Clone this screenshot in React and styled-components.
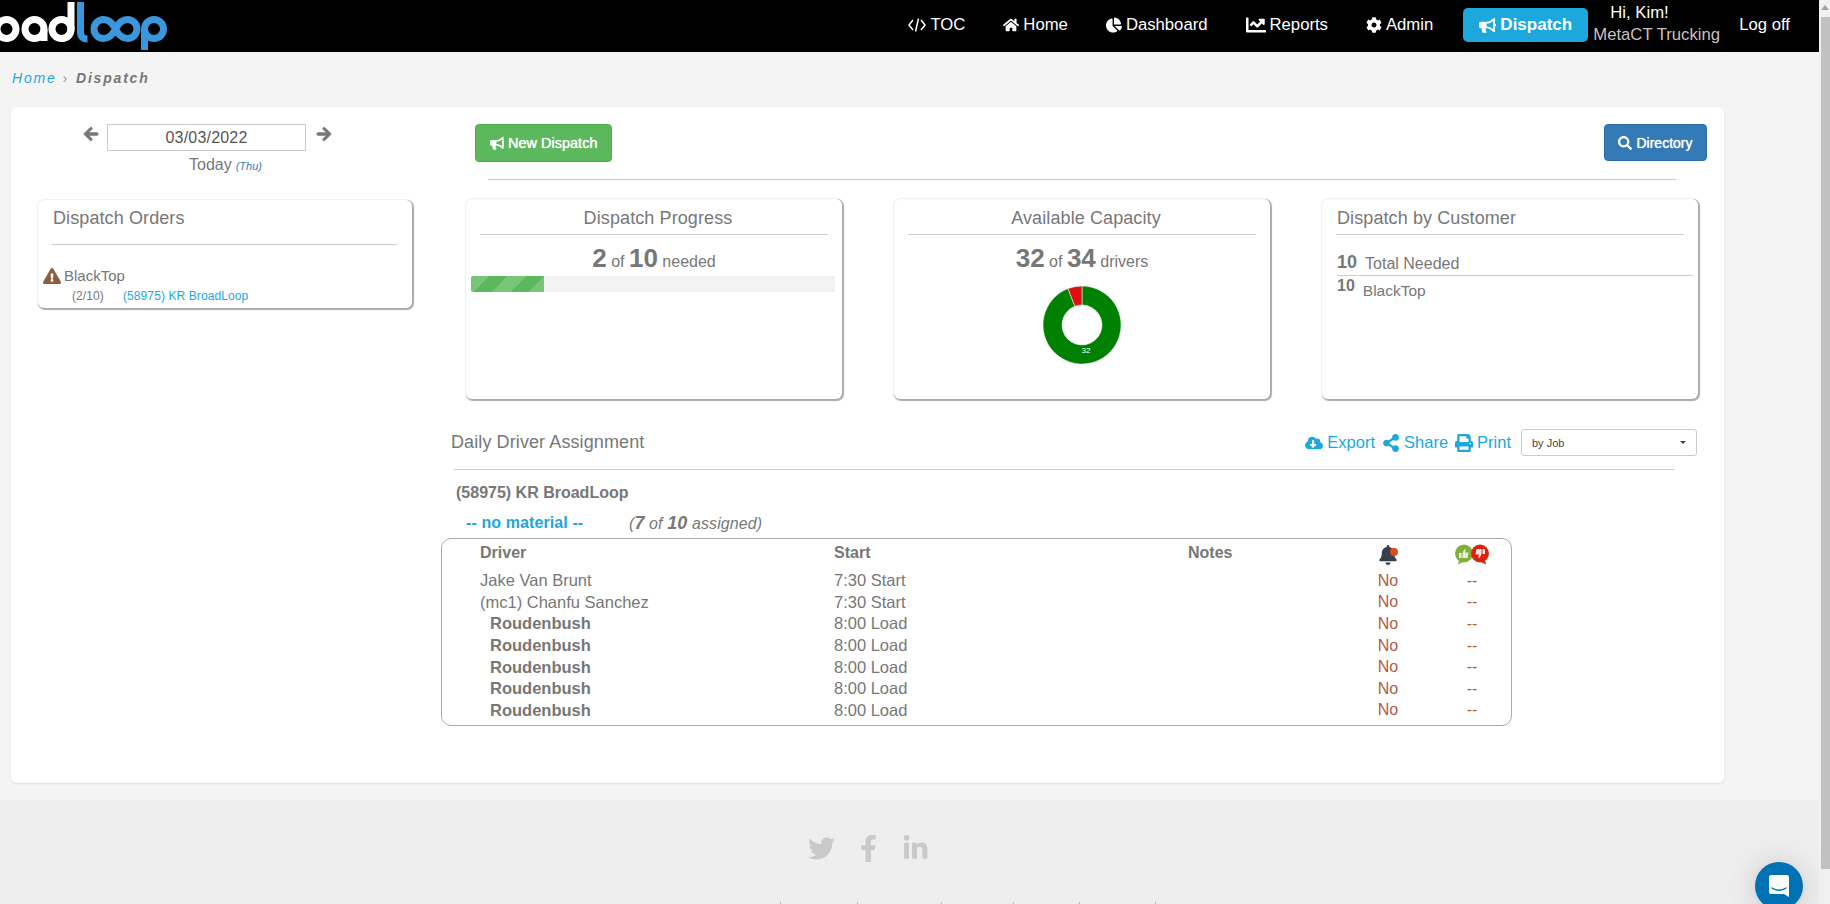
import React from 'react';
import styled, { createGlobalStyle } from 'styled-components';
import {
	FaArrowLeft,
	FaArrowRight,
	FaBell,
	FaBullhorn,
	FaChartLine,
	FaChartPie,
	FaCloudDownloadAlt,
	FaCog,
	FaExclamationTriangle,
	FaFacebookF,
	FaHome,
	FaLinkedinIn,
	FaPrint,
	FaSearch,
	FaShareAlt,
	FaTwitter,
} from 'react-icons/fa';

const GlobalStyle = createGlobalStyle`
	html, body {
		margin: 0;
		height: 904px;
		overflow: hidden;
		background: #f4f4f4;
	}
	body, button, select {
		font-family: "Liberation Sans", Arial, sans-serif;
	}
	* {
		box-sizing: border-box;
	}
`;

const Page = styled.div`
	width: 1819px;
	height: 904px;
	overflow: hidden;
	color: #777;
`;

const Navbar = styled.div`
	height: 52px;
	background: #000;
	display: flex;
	align-items: center;
	padding: 0 29px 2px 0;
	width: 1819px;
`;

const LogoBox = styled.div`
	margin-right: auto;
	height: 52px;
	align-self: flex-start;
	svg {
		display: block;
	}
`;

const NavLink = styled.a`
	color: #fff;
	font-size: 16.7px;
	display: flex;
	align-items: center;
	gap: 4px;
	margin-right: 38px;
	svg {
		font-size: 16px;
	}
`;

const DispatchTab = styled.a`
	width: 125px;
	height: 34px;
	margin-left: -8px;
	background: #1ca8dd;
	border-radius: 5px;
	color: #fff;
	font-size: 17px;
	font-weight: bold;
	display: flex;
	align-items: center;
	justify-content: center;
	gap: 4px;
`;

const UserBox = styled.div`
	width: 151px;
	font-size: 16.7px;
	line-height: 22px;
	color: #fff;
	margin-top: -2px;
	padding-left: 5px;
`;

const Greeting = styled.div`
	padding-left: 17px;
`;

const Company = styled.div`
	color: #cdbfbf;
	white-space: nowrap;
`;

const LogOff = styled.a`
	color: #fff;
	font-size: 16.7px;
`;

const Breadcrumb = styled.div`
	height: 55px;
	padding: 18px 0 0 12px;
	font-size: 14px;
	font-style: italic;
	letter-spacing: 1.8px;
	line-height: 16px;
	span {
		font-style: normal;
		margin: 0 7px 0 6px;
		color: #999;
	}
	a {
		color: #1ca8dd;
	}
	b {
		color: #777;
	}
`;

const Panel = styled.div`
	margin-left: 11px;
	width: 1713px;
	height: 676px;
	background: #fff;
	border-radius: 6px;
	box-shadow: 0 1px 2px #ddd;
	display: flex;
`;

const LeftColumn = styled.div`
	width: 430px;
	padding-top: 17px;
`;

const RightColumn = styled.div`
	flex: 1;
	padding: 17px 17px 0 0;
`;

const DateRow = styled.div`
	display: flex;
	align-items: flex-start;
	padding-left: 72px;
	color: #777;
	> svg {
		font-size: 16px;
		margin-top: 2px;
		stroke: currentColor;
		stroke-width: 30px;
	}
`;

const DateInput = styled.div`
	width: 199px;
	height: 27px;
	margin: 0 10px 0 8px;
	border: 1px solid #ccc;
	font-size: 16px;
	letter-spacing: 0.2px;
	line-height: 25px;
	text-align: center;
	color: #555;
`;

const TodayLine = styled.div`
	margin: 4px 0 0 178px;
	font-size: 16px;
	line-height: 20px;
	i {
		font-size: 11px;
		color: #337ab7;
		margin-left: 4px;
	}
`;

const Card = styled.div`
	background: #fff;
	border-radius: 6px;
	box-shadow: 1px 1px 1px 1px #aaa, 0 0 2px #e8e8e8;
	height: ${(p) => p.$height}px;
	padding: 0 15px;
	text-align: ${(p) => (p.$center ? 'center' : 'left')};
`;

const OrdersCard = styled(Card)`
	margin: 24px 0 0 27px;
	width: 374px;
`;

const CardTitle = styled.div`
	font-size: 18px;
	letter-spacing: 0.1px;
	line-height: 20px;
	padding: 9px 0 6px;
	border-bottom: 1px solid #ccc;
	color: #777;
`;

const OrdersTitle = styled(CardTitle)`
	padding: 8px 0 16px 1px;
	margin: 0 0 0 -1px;
`;

const OrderName = styled.div`
	display: flex;
	align-items: center;
	margin: 21px 0 0 -10px;
	font-size: 15px;
	line-height: 20px;
	gap: 3px;
	svg {
		color: #8a5e3c;
		font-size: 18px;
	}
`;

const OrderLine = styled.div`
	display: flex;
	font-size: 12px;
	letter-spacing: 0.1px;
	line-height: 14px;
	margin: 3px 0 0 19px;
	a {
		color: #1ca8dd;
		margin-left: 19px;
	}
`;

const Toolbar = styled.div`
	display: flex;
	justify-content: space-between;
	align-items: flex-start;
	padding-left: 34px;
`;

const Button = styled.button`
	border: 1px solid ${(p) => p.$border};
	background: ${(p) => p.$color};
	color: #fff;
	border-radius: 4px;
	font-size: ${(p) => p.$size}px;
	height: ${(p) => p.$height}px;
	width: ${(p) => p.$width}px;
	display: flex;
	align-items: center;
	justify-content: center;
	gap: 4px;
	padding: 0;
	text-shadow: 0 0 1px #fff;
`;

const Rule = styled.div`
	height: 1px;
	background: #ccc;
	margin: ${(p) => p.$margin};
`;

const CardRow = styled.div`
	display: flex;
	gap: 52px;
	margin-left: 25px;
`;

const StatCard = styled(Card)`
	width: 376px;
	padding: 0 5px;
`;

const StatTitle = styled(CardTitle)`
	margin: 0 9px;
	padding-left: ${(p) => (p.$center ? 8 : 1)}px;
`;

const StatLine = styled.div`
	font-size: 16px;
	line-height: 30px;
	margin-top: 8px;
	b {
		font-size: 26px;
	}
`;

const ProgressTrack = styled.div`
	height: 16px;
	margin: -1px 2px 0 0;
	background: #f4f4f4;
	border-radius: 3px;
	box-shadow: inset 0 0 1px #ccc;
	overflow: hidden;
`;

const ProgressFill = styled.div`
	height: 100%;
	background-color: #5cb85c;
	background-image: repeating-linear-gradient(
		135deg,
		#78c678 0,
		#78c678 13px,
		#5cb85c 13px,
		#5cb85c 26px
	);
`;

const DonutBox = styled.div`
	margin-top: 8px;
	svg {
		display: block;
		margin: 0 auto;
	}
`;

const CustomerRow = styled.div`
	display: flex;
	align-items: flex-start;
	margin-left: 10px;
	line-height: 20px;
	b {
		font-size: ${(p) => p.$big}px;
		margin-right: ${(p) => p.$gap}px;
	}
	span {
		font-size: ${(p) => p.$size}px;
		margin-top: ${(p) => p.$drop}px;
	}
`;

const TotalRow = styled(CustomerRow)`
	margin-top: 17px;
	padding-bottom: 1px;
	border-bottom: 1px solid #ccc;
`;

const SectionHead = styled.div`
	display: flex;
	align-items: center;
	justify-content: space-between;
	height: 27px;
	margin: 30px 10px 0 10px;
`;

const SectionTitle = styled.div`
	font-size: 18px;
	letter-spacing: 0.1px;
`;

const Actions = styled.div`
	display: flex;
	align-items: center;
	gap: 7px;
	font-size: 16.5px;
	color: #1ca8dd;
`;

const Action = styled.a`
	display: flex;
	align-items: center;
	gap: 4px;
	svg {
		font-size: 18px;
	}
`;

const Select = styled.div`
	width: 176px;
	height: 27px;
	margin-left: 3px;
	border: 1px solid #ccc;
	border-radius: 3px;
	font-size: 11px;
	color: #444;
	display: flex;
	align-items: center;
	justify-content: space-between;
	padding: 0 10px;
	&::after {
		content: '';
		border: 3px solid transparent;
		border-top-color: #444;
		border-bottom: 0;
	}
`;

const JobName = styled.div`
	font-size: 16px;
	font-weight: bold;
	line-height: 20px;
	margin: 13px 0 0 15px;
`;

const MaterialLine = styled.div`
	display: flex;
	font-size: 16px;
	letter-spacing: 0.1px;
	line-height: 20px;
	margin: 10px 0 0 25px;
	height: 25px;
`;

const Material = styled.b`
	width: 163px;
	color: #1ca8dd;
`;

const Assigned = styled.i`
	b {
		font-size: 18px;
	}
`;

const DriverTable = styled.div`
	width: 1071px;
	height: 188px;
	border: 1px solid #aaa;
	border-radius: 10px;
`;

const TableRow = styled.div`
	display: grid;
	grid-template-columns: 38px 354px 354px 150px 100px 68px;
	height: ${(p) => p.$height}px;
	align-items: center;
	font-size: 16.5px;
`;

const HeadCell = styled.b`
	font-size: 16px;
	padding-bottom: 3px;
	grid-column: ${(p) => (p.$first ? 2 : 'auto')};
`;

const DriverCell = styled.div`
	grid-column: 2;
	padding-left: ${(p) => (p.$bold ? 10 : 0)}px;
	font-weight: ${(p) => (p.$bold ? 'bold' : 'normal')};
`;

const StatusCell = styled.div`
	text-align: center;
	font-size: 16px;
	color: #b05c43;
`;

const IconCell = styled.div`
	display: flex;
	justify-content: center;
	svg {
		display: block;
	}
`;

const BellWrap = styled.div`
	position: relative;
	height: 20px;
	font-size: 20px;
	color: #34404f;
	&::after {
		content: '';
		position: absolute;
		top: 3px;
		right: 0;
		width: 8px;
		height: 8px;
		border-radius: 50%;
		background: #dd4a1f;
	}
`;

const Footer = styled.div`
	margin-top: 17px;
	height: 104px;
	background: #eee;
`;

const Social = styled.div`
	display: flex;
	justify-content: center;
	align-items: flex-start;
	gap: 20px;
	width: 1736px;
	padding-top: 35px;
	height: 102px;
	font-size: 27px;
	color: #c8cac8;
`;

const FooterLinks = styled.div`
	display: flex;
	padding-left: 780px;
	height: 2px;
`;

const FooterLink = styled.div`
	width: ${(p) => p.$width}px;
	border-left: 1px solid #bbb;
`;

const ScrollTrack = styled.div`
	position: fixed;
	top: 0;
	right: 0;
	width: 11px;
	height: 904px;
	background: #f1f1f1;
`;

const ScrollArrow = styled.div`
	width: 0;
	margin: 5px auto 0;
	border: 4px solid transparent;
	border-top: 0;
	border-bottom: 5px solid #a3a3a3;
`;

const ScrollThumb = styled.div`
	position: absolute;
	left: 2px;
	right: 0;
	top: 17px;
	height: 852px;
	background: #c1c1c1;
`;

const ChatBubble = styled.div`
	position: fixed;
	left: 1755px;
	top: 862px;
	width: 48px;
	height: 48px;
	border-radius: 50%;
	background: #0071b2;
	box-shadow: 0 1px 6px rgba(0, 0, 0, 0.06), 0 2px 32px rgba(0, 0, 0, 0.16);
	display: flex;
	align-items: center;
	justify-content: center;
`;

const Logo = () => (
	<svg width="170" height="52" viewBox="0 0 170 52" fill="none" strokeWidth="7">
		<g stroke="#fff">
			<circle cx="6.5" cy="29" r="9.5" />
			<circle cx="34.5" cy="29" r="9.5" />
			<path d="M44 29V41" />
			<circle cx="61.5" cy="29" r="9.5" />
			<path d="M71 2V29c0 6-4 9.500-9.500 9.500" />
		</g>
		<g stroke="#3a97dc">
			<path d="M80.500 2V32c0 5 3 7 7 7" />
			<path d="M115.500 29c-3-6-7-9.500-12-9.500a9.500 9.500 0 0 0 0 19c5 0 9-3.500 12-9.500c3-6 7-9.500 12-9.500a9.500 9.500 0 0 1 0 19c-5 0-9-3.500-12-9.500Z" />
			<circle cx="154" cy="29" r="9.500" />
			<path d="M144.500 29V50" />
		</g>
	</svg>
);

const CodeIcon = () => (
	<svg width="18" height="14" viewBox="0 0 18 14" fill="none" stroke="#fff" strokeWidth="1.500">
		<path d="M5 2 1 7l4 5M13 2l4 5-4 5M10.500 0.500 7.500 13.500" />
	</svg>
);

const arcPath = (from, to, outer, inner) => {
	const point = (deg, r) => {
		const rad = ((deg - 90) * Math.PI) / 180;
		return `${40 + r * Math.cos(rad)} ${40 + r * Math.sin(rad)}`;
	};
	const large = to - from > 180 ? 1 : 0;
	return `M${point(from, outer)}A${outer} ${outer} 0 ${large} 1 ${point(to, outer)}L${point(to, inner)}A${inner} ${inner} 0 ${large} 0 ${point(from, inner)}Z`;
};

const Donut = () => (
	<svg width="80" height="80" viewBox="0 0 80 80">
		<path d={arcPath(0, 339, 39, 20)} fill="#008000" stroke="#fff" strokeWidth="0.5" />
		<path d={arcPath(339, 360, 39, 20)} fill="#dc1010" stroke="#fff" strokeWidth="0.5" />
		<text x="44" y="68" fontSize="8" fill="#fff" textAnchor="middle" fontFamily="Liberation Sans">
			32
		</text>
	</svg>
);

const ThumbBubbles = () => (
	<svg width="34" height="21" viewBox="0 0 34 21">
		<circle cx="9" cy="9.500" r="9" fill="#7fb13c" />
		<path d="M4 16 3 20.500 8 18Z" fill="#7fb13c" />
		<path d="M4 9h2.500v5H4zM7.500 9l2-4 1.200.5-.7 3h3.500l-1 5.500H7.500z" fill="#e8f0d8" />
		<circle cx="25" cy="9.500" r="9" fill="#d9230f" />
		<path d="M30 16l1 4.500-5-2.500Z" fill="#d9230f" />
		<path d="M30 10h-2.500V5H30zM26.500 10l-2 4-1.200-.5.700-3h-3.500l1-5.500h5z" fill="#fbe6e2" />
	</svg>
);

const drivers = [
	{ name: 'Jake Van Brunt', start: '7:30 Start' },
	{ name: '(mc1) Chanfu Sanchez', start: '7:30 Start' },
	{ name: 'Roudenbush', start: '8:00 Load', bold: true },
	{ name: 'Roudenbush', start: '8:00 Load', bold: true },
	{ name: 'Roudenbush', start: '8:00 Load', bold: true },
	{ name: 'Roudenbush', start: '8:00 Load', bold: true },
	{ name: 'Roudenbush', start: '8:00 Load', bold: true },
];

const App = () => (
	<Page>
		<GlobalStyle />
		<Navbar>
			<LogoBox>
				<Logo />
			</LogoBox>
			<NavLink>
				<CodeIcon /> TOC
			</NavLink>
			<NavLink>
				<FaHome /> Home
			</NavLink>
			<NavLink>
				<FaChartPie /> Dashboard
			</NavLink>
			<NavLink>
				<FaChartLine size={20} /> Reports
			</NavLink>
			<NavLink>
				<FaCog /> Admin
			</NavLink>
			<DispatchTab>
				<FaBullhorn /> Dispatch
			</DispatchTab>
			<UserBox>
				<Greeting>Hi, Kim!</Greeting>
				<Company>MetaCT Trucking</Company>
			</UserBox>
			<LogOff>Log off</LogOff>
		</Navbar>
		<Breadcrumb>
			<a>Home</a>
			<span>›</span>
			<b>Dispatch</b>
		</Breadcrumb>
		<Panel>
			<LeftColumn>
				<DateRow>
					<FaArrowLeft />
					<DateInput>03/03/2022</DateInput>
					<FaArrowRight />
				</DateRow>
				<TodayLine>
					Today<i>(Thu)</i>
				</TodayLine>
				<OrdersCard $height={108}>
					<OrdersTitle>Dispatch Orders</OrdersTitle>
					<OrderName>
						<FaExclamationTriangle /> BlackTop
					</OrderName>
					<OrderLine>
						(2/10)
						<a>(58975) KR BroadLoop</a>
					</OrderLine>
				</OrdersCard>
			</LeftColumn>
			<RightColumn>
				<Toolbar>
					<Button $color="#5cb85c" $border="#4cae4c" $width={137} $height={38} $size={14.5}>
						<FaBullhorn /> New Dispatch
					</Button>
					<Button $color="#337ab7" $border="#2e6da4" $width={103} $height={37} $size={14}>
						<FaSearch /> Directory
					</Button>
				</Toolbar>
				<Rule $margin="17px 31px 19px 47px" />
				<CardRow>
					<StatCard $height={200} $center>
						<StatTitle $center>Dispatch Progress</StatTitle>
						<StatLine>
							<b>2</b> of <b>10</b> needed
						</StatLine>
						<ProgressTrack>
							<ProgressFill style={{ width: `${(2 / 10) * 100}%` }} />
						</ProgressTrack>
					</StatCard>
					<StatCard $height={200} $center>
						<StatTitle $center>Available Capacity</StatTitle>
						<StatLine>
							<b>32</b> of <b>34</b> drivers
						</StatLine>
						<DonutBox>
							<Donut />
						</DonutBox>
					</StatCard>
					<StatCard $height={200}>
						<StatTitle>Dispatch by Customer</StatTitle>
						<TotalRow $size={16} $big={18} $gap={8} $drop={2}>
							<b>10</b>
							<span>Total Needed</span>
						</TotalRow>
						<CustomerRow $size={15.5} $big={16} $gap={8} $drop={5}>
							<b>10</b>
							<span>BlackTop</span>
						</CustomerRow>
					</StatCard>
				</CardRow>
				<SectionHead>
					<SectionTitle>Daily Driver Assignment</SectionTitle>
					<Actions>
						<Action>
							<FaCloudDownloadAlt /> Export
						</Action>
						<Action>
							<FaShareAlt /> Share
						</Action>
						<Action>
							<FaPrint /> Print
						</Action>
						<Select>by Job</Select>
					</Actions>
				</SectionHead>
				<Rule $margin="13px 32px 0 13px" />
				<JobName>(58975) KR BroadLoop</JobName>
				<MaterialLine>
					<Material>-- no material --</Material>
					<Assigned>
						(<b>7</b> of <b>10</b> assigned)
					</Assigned>
				</MaterialLine>
				<DriverTable>
					<TableRow $height={31}>
						<HeadCell $first>Driver</HeadCell>
						<HeadCell>Start</HeadCell>
						<HeadCell>Notes</HeadCell>
						<IconCell>
							<BellWrap>
								<FaBell />
							</BellWrap>
						</IconCell>
						<IconCell>
							<ThumbBubbles />
						</IconCell>
					</TableRow>
					{drivers.map((driver, i) => (
						<TableRow key={i} $height={21.6}>
							<DriverCell $bold={driver.bold}>{driver.name}</DriverCell>
							<div>{driver.start}</div>
							<div />
							<StatusCell>No</StatusCell>
							<StatusCell>--</StatusCell>
						</TableRow>
					))}
				</DriverTable>
			</RightColumn>
		</Panel>
		<Footer>
			<Social>
				<FaTwitter />
				<FaFacebookF />
				<FaLinkedinIn />
			</Social>
			<FooterLinks>
				<FooterLink $width={77} />
				<FooterLink $width={84} />
				<FooterLink $width={72} />
				<FooterLink $width={66} />
				<FooterLink $width={76} />
				<FooterLink $width={10} />
			</FooterLinks>
		</Footer>
		<ScrollTrack>
			<ScrollArrow />
			<ScrollThumb />
		</ScrollTrack>
		<ChatBubble>
			<svg width="22" height="24" viewBox="0 0 22 24">
				<path d="M3 1h16a2 2 0 0 1 2 2v20l-5-3H3a2 2 0 0 1-2-2V3a2 2 0 0 1 2-2Z" fill="#fff" />
				<path d="M4 14c4 3 10 3 14 0" fill="none" stroke="#0071b2" strokeWidth="1.500" strokeLinecap="round" />
			</svg>
		</ChatBubble>
	</Page>
);

export default App;
